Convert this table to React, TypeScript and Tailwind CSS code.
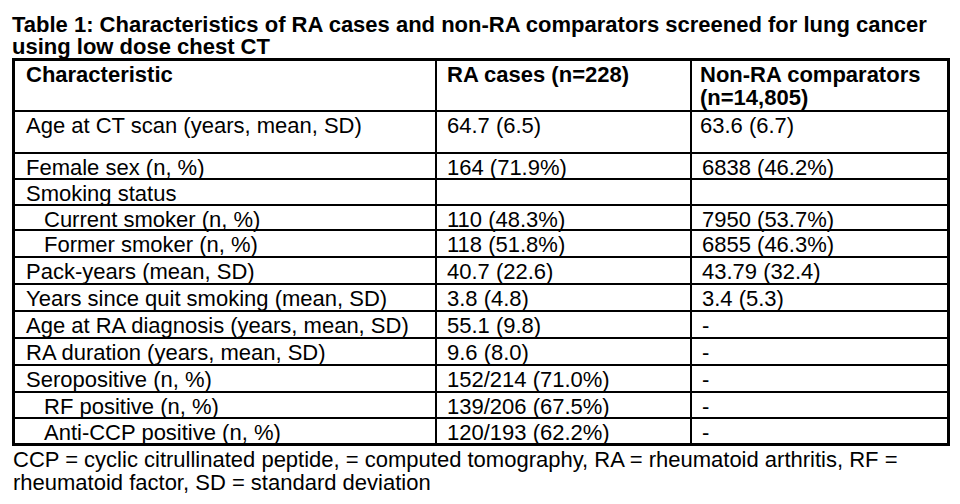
import React from "react";

type Row = { label: string; indent?: boolean; a: string; b: string; h: string };

const rows: Row[] = [
  { label: "Female sex (n, %)", a: "164 (71.9%)", b: "6838 (46.2%)", h: "h-[26px]" },
  { label: "Smoking status", a: "", b: "", h: "h-[26px]" },
  { label: "Current smoker (n, %)", indent: true, a: "110 (48.3%)", b: "7950 (53.7%)", h: "h-[25px]" },
  { label: "Former smoker (n, %)", indent: true, a: "118 (51.8%)", b: "6855 (46.3%)", h: "h-[27px]" },
  { label: "Pack-years (mean, SD)", a: "40.7 (22.6)", b: "43.79 (32.4)", h: "h-[27px]" },
  { label: "Years since quit smoking (mean, SD)", a: "3.8 (4.8)", b: "3.4 (5.3)", h: "h-[27px]" },
  { label: "Age at RA diagnosis (years, mean, SD)", a: "55.1 (9.8)", b: "-", h: "h-[27px]" },
  { label: "RA duration (years, mean, SD)", a: "9.6 (8.0)", b: "-", h: "h-[27px]" },
  { label: "Seropositive (n, %)", a: "152/214 (71.0%)", b: "-", h: "h-[27px]" },
  { label: "RF positive (n, %)", indent: true, a: "139/206 (67.5%)", b: "-", h: "h-[26px]" },
  { label: "Anti-CCP positive (n, %)", indent: true, a: "120/193 (62.2%)", b: "-", h: "h-[27px]" },
];

export default function App() {
  return (
    <div className="w-[960px] h-[504px] bg-white text-black font-['Liberation_Sans',Arial,sans-serif] overflow-hidden">
      <div className="pl-[12px] pt-[14px]">
        <div className="font-bold text-[22px] leading-[22px] w-[940px]">
          Table 1: Characteristics of RA cases and non-RA comparators screened for lung cancer using low dose chest CT
        </div>
        <div className="w-[938px] border-l-[3px] border-t-[3px] border-black grid grid-cols-[422px_255px_258px] text-[22px] leading-[23px]">
          <div className="h-[51px] border-r-2 border-b-2 border-black pl-[11px] pt-[2px] font-bold">Characteristic</div>
          <div className="h-[51px] border-r-2 border-b-2 border-black pl-[10px] pt-[2px] font-bold">RA cases (n=228)</div>
          <div className="h-[51px] border-r-[3px] border-b-2 border-black pl-[8px] pt-[2px] font-bold">
            Non-RA comparators (n=14,805)
          </div>
          <div className="h-[42px] border-r-2 border-b-2 border-black pl-[11px] pt-[2px]">Age at CT scan (years, mean, SD)</div>
          <div className="h-[42px] border-r-2 border-b-2 border-black pl-[10px] pt-[2px]">64.7 (6.5)</div>
          <div className="h-[42px] border-r-[3px] border-b-2 border-black pl-[8px] pt-[2px]">63.6 (6.7)</div>
          {rows.map((r, i) => {
            const last = i === rows.length - 1;
            const bb = last ? "border-b-[3px]" : "border-b-2";
            return (
              <React.Fragment key={i}>
                <div className={`${r.h} ${bb} border-r-2 border-black pt-[2px] whitespace-nowrap ${r.indent ? "pl-[29px]" : "pl-[11px]"}`}>
                  {r.label}
                </div>
                <div className={`${r.h} ${bb} border-r-2 border-black pl-[10px] pt-[2px] whitespace-nowrap`}>{r.a}</div>
                <div className={`${r.h} ${bb} border-r-[3px] border-black pl-[10px] pt-[2px] whitespace-nowrap`}>{r.b}</div>
              </React.Fragment>
            );
          })}
        </div>
        <div className="text-[22px] leading-[23px] w-[940px] pl-[1px] pt-[2px]">
          CCP = cyclic citrullinated peptide, = computed tomography, RA = rheumatoid arthritis, RF = rheumatoid factor, SD = standard deviation
        </div>
      </div>
    </div>
  );
}
